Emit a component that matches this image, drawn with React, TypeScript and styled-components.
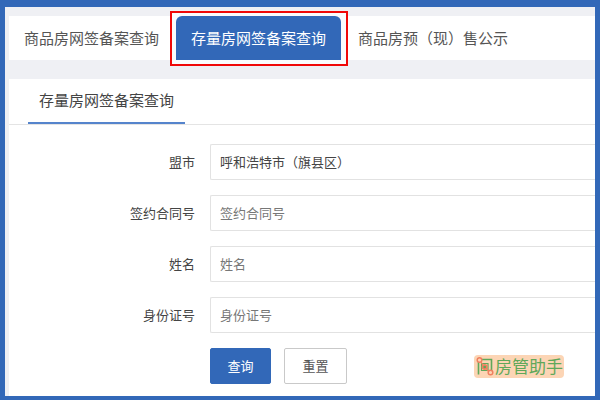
import React from 'react';
import styled, { createGlobalStyle } from 'styled-components';

const BLUE = '#3268b8';

const GlobalStyle = createGlobalStyle`
  * { box-sizing: border-box; }
  body { margin: 0; }
  body, button, input, select {
    font-family: "Noto Sans CJK SC", "Noto Sans", sans-serif;
  }
`;

const Frame = styled.div`
  min-height: 100vh;
  display: flex;
  flex-direction: column;
  border: solid ${BLUE};
  border-width: 7px 5px 4px;
  background: #eff0f4;
  padding: 9px 0 0 4px;
`;

const TabBar = styled.nav`
  display: flex;
  gap: 2px;
  height: 44px;
  background: #fff;
`;

const TabSlot = styled.div`
  position: relative;
  display: flex;
`;

const Tab = styled.button<{ $active?: boolean }>`
  border: 0;
  padding: 0 15px;
  min-width: 165px;
  border-radius: 6px 6px 0 0;
  background: ${(p) => (p.$active ? BLUE : 'transparent')};
  color: ${(p) => (p.$active ? '#fff' : '#555')};
  font-size: 15px;
  line-height: 20px;
  white-space: nowrap;
  cursor: pointer;
`;

const Highlight = styled.span`
  position: absolute;
  inset: -5px -7px -6px -6px;
  border: 2px solid #f00808;
  pointer-events: none;
`;

const HighlightFill = styled.span`
  position: absolute;
  inset: -3px -5px -4px -4px;
  background: #fafcfd;
`;

const ActiveTab = styled(Tab)`
  position: relative;
`;

const Panel = styled.section`
  flex: 1;
  margin-top: 19px;
  background: #fff;
`;

const PanelHeader = styled.header`
  display: flex;
  height: 46px;
  padding-left: 19px;
  border-bottom: 1px solid #e4e4e4;
`;

const PanelTitle = styled.h2`
  margin: 0;
  min-width: 157px;
  padding: 11px 10px 0;
  border-bottom: 2px solid #5584cc;
  color: #444;
  font-size: 15px;
  font-weight: 400;
  line-height: 20px;
  text-align: center;
`;

const Form = styled.form`
  display: grid;
  grid-template-columns: 186px 1fr;
  column-gap: 15px;
  row-gap: 15px;
  padding-top: 19px;
  align-items: center;
`;

const Label = styled.label`
  color: #444;
  font-size: 13px;
  line-height: 20px;
  text-align: right;
`;

const fieldStyles = `
  width: 100%;
  height: 36px;
  margin: 0;
  padding: 0 9px;
  border: 1px solid #e2e2e2;
  border-right: 0;
  border-radius: 2px 0 0 2px;
  background: #fff;
  color: #444;
  font-size: 13px;
  line-height: 20px;
  outline: none;
`;

const Select = styled.select`
  ${fieldStyles}
  appearance: none;
`;

const Input = styled.input`
  ${fieldStyles}
  padding-bottom: 2px;
  &::placeholder { color: #777; opacity: 1; }
`;

const Footer = styled.div`
  grid-column: 2;
  display: flex;
  align-items: center;
  gap: 13px;
`;

const Button = styled.button<{ $primary?: boolean }>`
  height: 36px;
  padding: 0 16px;
  min-width: ${(p) => (p.$primary ? '61px' : '63px')};
  border: 1px solid ${(p) => (p.$primary ? BLUE : '#c9c9c9')};
  border-radius: 2px;
  background: ${(p) => (p.$primary ? BLUE : '#fff')};
  color: ${(p) => (p.$primary ? '#fff' : '#555')};
  font-size: 13px;
  line-height: 20px;
  white-space: nowrap;
`;

const Brand = styled.div`
  display: flex;
  align-items: center;
  gap: 1px;
  height: 23px;
  margin: 0 31px 0 auto;
  padding: 0 1px 0 2px;
  border-radius: 4px;
  background: #fcd5b5;
  color: #5fa85a;
  font-size: 17px;
  line-height: 22px;
  white-space: nowrap;
`;

const BrandIcon = () => (
  <svg width="18" height="20" viewBox="0 0 18 20" fill="none" aria-hidden="true">
    <path d="M2.500 6v12.500M6 3.500h9.500v12" stroke="#5fa85a" strokeWidth="1.600" />
    <path d="M5.500 7.500h6.500v7h-6.500z" stroke="#5fa85a" strokeWidth="1.200" />
    <path d="M5 6l2 3M10.500 13l2.500 2.500" stroke="#f0805f" strokeWidth="1.200" />
    <circle cx="3.500" cy="4" r="2.300" fill="#fcd5b5" stroke="#f0805f" strokeWidth="1.500" />
    <circle cx="8.700" cy="11" r="2.200" fill="#5fa85a" stroke="#f0805f" strokeWidth="1.700" />
    <circle cx="14.500" cy="16.500" r="2.300" fill="#fcd5b5" stroke="#f0805f" strokeWidth="1.500" />
  </svg>
);

const fields = [
  { id: 'contract', label: '签约合同号' },
  { id: 'name', label: '姓名' },
  { id: 'idcard', label: '身份证号' },
];

export default function App() {
  return (
    <>
      <GlobalStyle />
      <Frame>
        <TabBar>
          <Tab type="button">商品房网签备案查询</Tab>
          <TabSlot>
            <HighlightFill />
            <ActiveTab type="button" $active aria-current="page">存量房网签备案查询</ActiveTab>
            <Highlight />
          </TabSlot>
          <Tab type="button">商品房预（现）售公示</Tab>
        </TabBar>
        <Panel>
          <PanelHeader>
            <PanelTitle>存量房网签备案查询</PanelTitle>
          </PanelHeader>
          <Form onSubmit={(e) => e.preventDefault()}>
            <Label htmlFor="city">盟市</Label>
            <Select id="city" defaultValue="hohhot">
              <option value="hohhot">呼和浩特市（旗县区）</option>
            </Select>
            {fields.map((f) => (
              <React.Fragment key={f.id}>
                <Label htmlFor={f.id}>{f.label}</Label>
                <Input id={f.id} type="text" placeholder={f.label} />
              </React.Fragment>
            ))}
            <Footer>
              <Button type="submit" $primary>查询</Button>
              <Button type="reset">重置</Button>
              <Brand>
                <BrandIcon />
                <span>房管助手</span>
              </Brand>
            </Footer>
          </Form>
        </Panel>
      </Frame>
    </>
  );
}
